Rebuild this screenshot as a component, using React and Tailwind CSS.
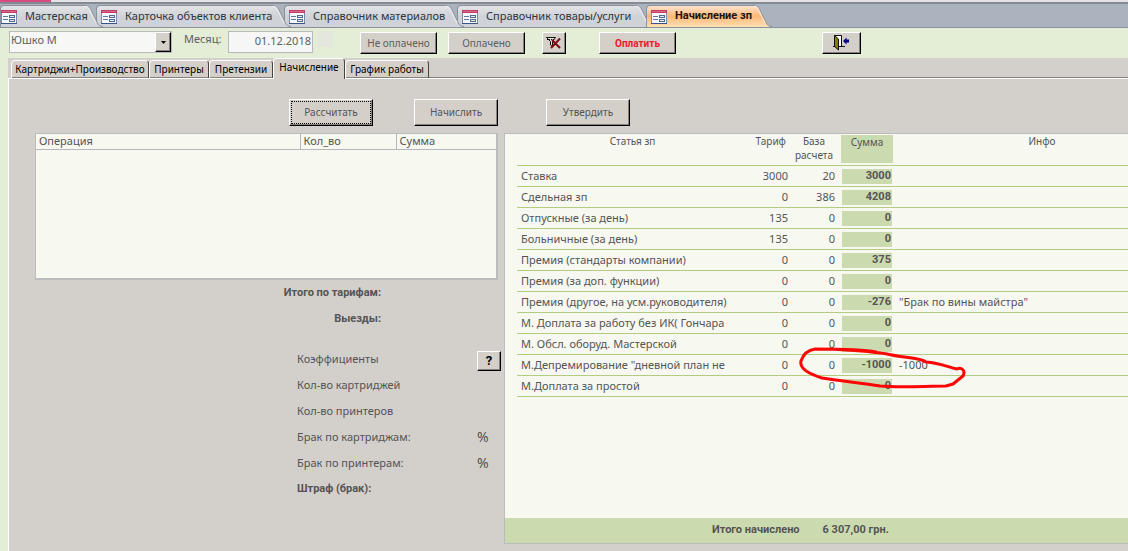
import React from "react";

const raised =
  "border border-t-white border-l-white border-r-black border-b-black bg-[#d4cfc9] shadow-[inset_-1px_-1px_0_#85827e]";

const strong = "font-['Roboto','Noto_Sans',sans-serif] font-bold";

function FormIcon() {
  return (
    <svg className="h-4 w-4 shrink-0" viewBox="0 0 16 16" shapeRendering="crispEdges" aria-hidden="true">
      <rect x="0" y="1" width="16" height="14" fill="#f4f7fc" />
      <path d="M0 1h16v3H0z" fill="#c43c66" />
      <path d="M1 2h14v1H1z" fill="#d9698a" />
      <path d="M0 4h1v11H0zM15 4h1v11h-1z" fill="#7f8aa8" />
      <path d="M0 14h16v1H0z" fill="#3b5487" />
      <path d="M2 7h5v1H2zM2 10h5v1H2z" fill="#6479a0" />
      <path d="M8 6h6v3H8zM8 10h6v3H8z" fill="#51698f" />
      <path d="M9 7h4v1H9zM9 11h4v1H9z" fill="#e6edf8" />
    </svg>
  );
}

function TabEnd({ active }) {
  return (
    <svg className="h-[22px] w-[19px] shrink-0" viewBox="0 0 19 22" aria-hidden="true">
      <defs>
        <linearGradient id={active ? "endOn" : "endOff"} x1="0" y1="0" x2="0" y2="1">
          <stop offset="0" stopColor={active ? "#fce3cd" : "#e2e4e7"} />
          <stop offset="0.5" stopColor={active ? "#fdb878" : "#cfd2d7"} />
          <stop offset="1" stopColor={active ? "#fde0b4" : "#cfd2d8"} />
        </linearGradient>
      </defs>
      <path d="M0 0H1C5 0 6 3 8 7L13 17C14 20 16 22 19 22H0Z" fill={active ? "url(#endOn)" : "url(#endOff)"} />
      <path d="M0 .5H1C5 .5 6 3 8 7L13 17C14 20 16 21.5 19 21.5" fill="none" stroke="#8b919b" />
      <path d="M0 1.5H1C4 1.5 5 4 7 8L12 18" fill="none" stroke="#f7f8fa" strokeOpacity=".8" />
    </svg>
  );
}

const docTabs = [
  { label: "Мастерская", cls: "z-50 w-[103px]", pad: "pl-0" },
  { label: "Карточка объектов клиента", cls: "z-40 -ml-[7px] w-[195px]", pad: "pl-1" },
  { label: "Справочник материалов", cls: "z-30 -ml-[7px] w-[180px]", pad: "pl-1" },
  { label: "Справочник товары/услуги", cls: "z-20 -ml-[7px] w-[197px]", pad: "pl-1" },
  { label: "Начисление зп", cls: "z-50 -ml-2 w-[126px]", pad: "pl-1", active: true },
];

function DocTabs() {
  return (
    <nav className="flex h-[26px] border-b border-[#8b919b] bg-[#abb3be] pt-[3px] shadow-[inset_0_2px_0_#858b95]">
      {docTabs.map((t) => (
        <a key={t.label} href="#" className={`relative flex h-[22px] shrink-0 items-center ${t.cls}`}>
          <span
            className={`flex h-[22px] min-w-0 flex-1 items-center gap-2 whitespace-nowrap rounded-tl border-l border-t border-[#8b919b] text-[11px] ${t.pad} ${
              t.active
                ? `bg-linear-to-b from-[#fce3cd] via-[#fdb878] to-[#fde0b4] text-[#1c1410] ${strong}`
                : "bg-linear-to-b from-[#e2e4e7] via-[#cfd2d7] to-[#cfd2d8] text-[#30353c]"
            }`}
          >
            <FormIcon />
            <span className="relative z-10">{t.label}</span>
          </span>
          <TabEnd active={t.active} />
        </a>
      ))}
    </nav>
  );
}

function FilterIcon() {
  return (
    <svg width="16" height="14" viewBox="0 0 16 14" aria-hidden="true">
      <path d="M.5 1.5H9.500L6.500 5.500V10.500L4.500 9V5.500Z" fill="#e9e6e0" stroke="#111" />
      <path d="M1 3.500H8" stroke="#111" strokeDasharray="1 1" />
      <path d="M6 4L14 12M14 2.500L5 12" stroke="#7b0e12" strokeWidth="2" />
    </svg>
  );
}

function DoorIcon() {
  return (
    <svg width="17" height="16" viewBox="0 0 17 16" aria-hidden="true">
      <path d="M1.500 .5H8.500V11.500H1.500Z" fill="#fff" stroke="#111" />
      <path d="M1.500 .5L5.500 4V15L1.500 11.500Z" fill="#808000" stroke="#111" />
      <path d="M0 11.500H2M6 11.500H12" stroke="#111" />
      <path d="M10 6L13.500 2.500V4.500H16V7.500H13.500V9.500Z" fill="#000080" />
    </svg>
  );
}

function Toolbar() {
  return (
    <div className="flex h-[30px] items-start bg-[#e4edd6] pl-[9px] pt-[3px] text-[10px] text-[#5f6062]">
      <div className="relative w-[163px]">
        <select
          aria-label="Сотрудник"
          className="h-[22px] w-full appearance-none border border-[#b9babd] bg-[#f7f7f6] pb-1 pl-px text-[11px] leading-4"
        >
          <option>Юшко М</option>
        </select>
        <span className={`pointer-events-none absolute right-px top-px flex h-5 w-4 items-center justify-center ${raised}`}>
          <svg width="5" height="3" viewBox="0 0 5 3" aria-hidden="true">
            <path d="M0 0H5L2.500 3Z" fill="#000" />
          </svg>
        </span>
      </div>
      <label htmlFor="month" className="ml-3 w-[44px] whitespace-nowrap text-[11px] leading-4">
        Месяц:
      </label>
      <input
        id="month"
        defaultValue="01.12.2018"
        className="h-[22px] w-[85px] border border-[#b9babd] bg-[#f5f6f5] pb-1 pr-px text-right text-[11px] leading-4"
      />
      <span className="ml-1 h-4 w-4 bg-[#e4e7dc]" />
      <button className={`ml-[27px] mt-px h-[22px] w-[77px] ${raised}`}>Не оплачено</button>
      <button className={`ml-[11px] mt-px h-[22px] w-[77px] ${raised}`}>Оплачено</button>
      <button aria-label="Снять фильтр" className={`ml-[17px] mt-px flex h-[22px] w-6 items-center justify-center ${raised}`}>
        <FilterIcon />
      </button>
      <button className={`ml-[33px] mt-px h-[22px] w-[77px] text-[#ee1c24] ${strong} ${raised}`}>Оплатить</button>
      <button aria-label="Закрыть" className={`ml-[146px] mt-px flex h-[22px] w-[39px] items-center justify-center ${raised}`}>
        <DoorIcon />
      </button>
    </div>
  );
}

const pages = [
  ["Картриджи+Производство", "w-[138px]"],
  ["Принтеры", "w-[60px]"],
  ["Претензии", "w-[64px]"],
  ["Начисление", "w-[72px]"],
  ["График работы", "w-[84px]"],
];

function PageTabs() {
  return (
    <div role="tablist" className="flex h-[21px] items-end border-b border-white pl-[3px] text-[10px] text-black">
      {pages.map(([label, w], i) => (
        <button
          key={label}
          role="tab"
          aria-selected={i === 3}
          className={`whitespace-nowrap rounded-t-sm border border-b-0 border-t-white border-l-white border-r-[#454340] bg-[#d4cfc9] ${w} ${
            i === 3 ? "-mb-px h-[21px] pb-1" : "h-[18px] shadow-[inset_0_-1px_0_#85827e]"
          }`}
        >
          {label}
        </button>
      ))}
      <span className="h-px flex-1 bg-[#85827e]" />
    </div>
  );
}

const rows = [
  ["Ставка", 3000, 20, 3000, ""],
  ["Сдельная зп", 0, 386, 4208, ""],
  ["Отпускные (за день)", 135, 0, 0, ""],
  ["Больничные (за день)", 135, 0, 0, ""],
  ["Премия (стандарты компании)", 0, 0, 375, ""],
  ["Премия (за доп. функции)", 0, 0, 0, ""],
  ["Премия (другое, на усм.руководителя)", 0, 0, -276, "\"Брак по вины майстра\""],
  ["М. Доплата за работу без ИК( Гончара", 0, 0, 0, ""],
  ["М. Обсл. оборуд. Мастерской", 0, 0, 0, ""],
  ["М.Депремирование \"дневной план не", 0, 0, -1000, "-1000"],
  ["М.Доплата за простой", 0, 0, 0, ""],
];

function PayTable() {
  return (
    <div className="relative flex min-w-0 flex-1 flex-col border border-r-0 border-[#bbbcbe] bg-[#f7f8f0]">
      <div className="pl-3">
        <table className="w-full table-fixed border-collapse text-[11px] leading-[14px]">
          <colgroup>
            <col className="w-[215px]" />
            <col className="w-[58px]" />
            <col className="w-12" />
            <col className="w-[58px]" />
            <col />
          </colgroup>
          <thead>
            <tr className="h-[31px] border-b border-[#b4cc82] align-top text-[10px] *:font-normal">
              <th className="pl-4">Статья зп</th>
              <th className="pr-1 text-right">Тариф</th>
              <th>
                База
                <br />
                расчета
              </th>
              <th className="px-[3px] pt-px">
                <div className="h-7 bg-[#ccdab0]">Сумма</div>
              </th>
              <th className="pl-[60px]">Инфо</th>
            </tr>
          </thead>
          <tbody>
            {rows.map((r) => (
              <tr key={r[0]} className="h-[21px] border-b border-[#b4cc82]">
                <td className="whitespace-nowrap pl-1">{r[0]}</td>
                <td className="pr-[2px] text-right">{r[1]}</td>
                <td className="pr-[3px] text-right">{r[2]}</td>
                <td className="px-1 pt-px">
                  <div className={`h-[15px] bg-[#ccdab0] pr-px text-right text-[11px] ${strong}`}>{r[3]}</div>
                </td>
                <td className="whitespace-nowrap pl-[3px]">{r[4]}</td>
              </tr>
            ))}
          </tbody>
        </table>
      </div>
      <div className={`mt-auto flex h-[25px] items-center gap-[23px] whitespace-nowrap bg-[#ccdab0] pl-[207px] text-[11px] ${strong}`}>
        <span>Итого начислено</span>
        <span>6 307,00 грн.</span>
      </div>
      <svg
        className="pointer-events-none absolute left-[293px] top-[211px] h-[46px] w-[172px]"
        viewBox="798 345 172 46"
        fill="none"
        stroke="#fb0505"
        strokeWidth="3"
        strokeLinecap="round"
        strokeLinejoin="round"
        aria-hidden="true"
      >
        <path d="M876 352C862 349 838 349 815 349C808 350 803 355 801 361C799 369 809 374 822 378C840 381 862 383 880 386C902 388 925 386 946 386L953 384L963 376C966 370 961 367 957 369C948 367 940 363 926 362C920 357 902 358 887 354C870 351 846 350 830 349" />
      </svg>
    </div>
  );
}

const stats = [
  ["Коэффициенты", ""],
  ["Кол-во картриджей", ""],
  ["Кол-во принтеров", ""],
  ["Брак по картриджам:", "%"],
  ["Брак по принтерам:", "%"],
  ["Штраф (брак):", ""],
];

function Operations() {
  return (
    <div className="w-[469px] shrink-0">
      <div className="h-[147px] w-[463px] border-2 border-l border-t border-[#bbbcbe] bg-[#f7f8f0]">
        <table className="w-full table-fixed border-collapse text-left text-[11px]">
          <thead>
            <tr className="h-[15px] border-b border-[#b5b7bd] leading-[14px] *:pl-[3px] *:font-normal">
              <th className="w-[264px]">Операция</th>
              <th className="w-24 border-l border-[#b5b7bd]">Кол_во</th>
              <th className="border-l border-[#b5b7bd]">Сумма</th>
            </tr>
          </thead>
        </table>
      </div>
      <div className={`w-[346px] text-right text-[11px] leading-[26px] ${strong}`}>
        <p>Итого по тарифам:</p>
        <p>Выезды:</p>
      </div>
      <div className="mt-[14px] pl-[262px] text-[11px] leading-[26px]">
        {stats.map(([label, unit], i) => (
          <div key={label} className="flex h-[26px] items-center">
            <span className={`w-[180px] ${i === 5 ? strong : ""}`}>{label}</span>
            {unit && <span className="text-[14px]">{unit}</span>}
            {i === 0 && (
              <button
                aria-label="Справка"
                className={`mt-1 h-5 w-6 text-[13px] leading-4 text-black ${strong} ${raised}`}
              >
                ?
              </button>
            )}
          </div>
        ))}
      </div>
    </div>
  );
}

export default function App() {
  return (
    <div className="flex min-h-screen flex-col overflow-hidden bg-[#e4edd6] font-['Noto_Sans','Open_Sans',sans-serif] text-[#545456]">
      <div className="flex h-[2px] shrink-0 bg-[#e3e3e6]">
        <span className="w-[51px] bg-[#d94a80]" />
      </div>
      <DocTabs />
      <Toolbar />
      <main className="ml-2 flex flex-1 flex-col bg-[#d3cfca]">
        <PageTabs />
        <section className="flex flex-1 flex-col border-l border-white pb-[7px] pt-5">
          <div className="flex pl-[280px] text-[10px]">
            <button className={`h-[27px] w-[84px] p-px ${raised}`}>
              <span className="flex h-full items-center justify-center border border-dotted border-black">Рассчитать</span>
            </button>
            <button className={`ml-[41px] h-[27px] w-[84px] ${raised}`}>Начислить</button>
            <button className={`ml-12 h-[27px] w-[84px] ${raised}`}>Утвердить</button>
          </div>
          <div className="mt-[7px] flex flex-1 pl-[26px]">
            <Operations />
            <PayTable />
          </div>
        </section>
      </main>
    </div>
  );
}
